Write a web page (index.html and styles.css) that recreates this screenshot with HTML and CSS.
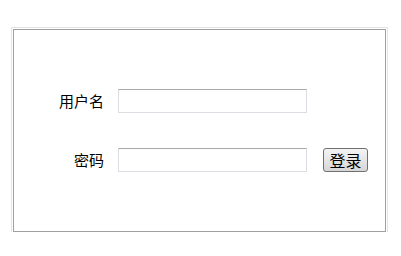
FILE: index.html
```html
<!DOCTYPE html>
<html lang="zh">
<head>
<meta charset="utf-8">
<title>登录</title>
<link rel="stylesheet" href="styles.css">
</head>
<body>
<form class="login-box">
  <div class="row">
    <label class="label" for="user">用户名</label>
    <input class="field" id="user" type="text">
  </div>
  <div class="row">
    <label class="label" for="pass">密码</label>
    <input class="field" id="pass" type="password">
    <button class="btn" type="button">登录</button>
  </div>
</form>
</body>
</html>
```
FILE: styles.css
```css
html, body {
  margin: 0;
  padding: 0;
  background: #ffffff;
}
body {
  font-family: "Noto Sans CJK SC", "Noto Sans", sans-serif;
  font-size: 15px;
  color: #000;
}
.login-box {
  box-sizing: border-box;
  margin: 29px 0 0 13px;
  width: 373px;
  height: 203px;
  border: 1px solid #a0a0a0;
  box-shadow: 0 0 0 1px #ffffff, 0 0 0 2px #e4e4e4;
  padding-top: 59px;
  display: flex;
  flex-direction: column;
  gap: 35px;
}
.row {
  display: flex;
  align-items: center;
  height: 24px;
}
.label {
  width: 90px;
  text-align: right;
  margin-right: 14px;
  line-height: 24px;
}
.field {
  box-sizing: border-box;
  width: 189px;
  height: 24px;
  margin: 0;
  padding: 0 3px;
  border: 1px solid #dcdce2;
  border-top-color: #a8a8a8;
  background: #fff;
  outline: none;
}
.btn {
  box-sizing: border-box;
  margin: 0 0 0 16px;
  width: 45px;
  height: 24px;
  padding: 0;
  border: 1px solid #707070;
  border-radius: 3px;
  background: linear-gradient(#f4f4f4, #e6e6e6 50%, #d6d6d6);
  font-family: "Noto Sans CJK SC", sans-serif;
  font-size: 16px;
  line-height: 22px;
  color: #000;
}
```
